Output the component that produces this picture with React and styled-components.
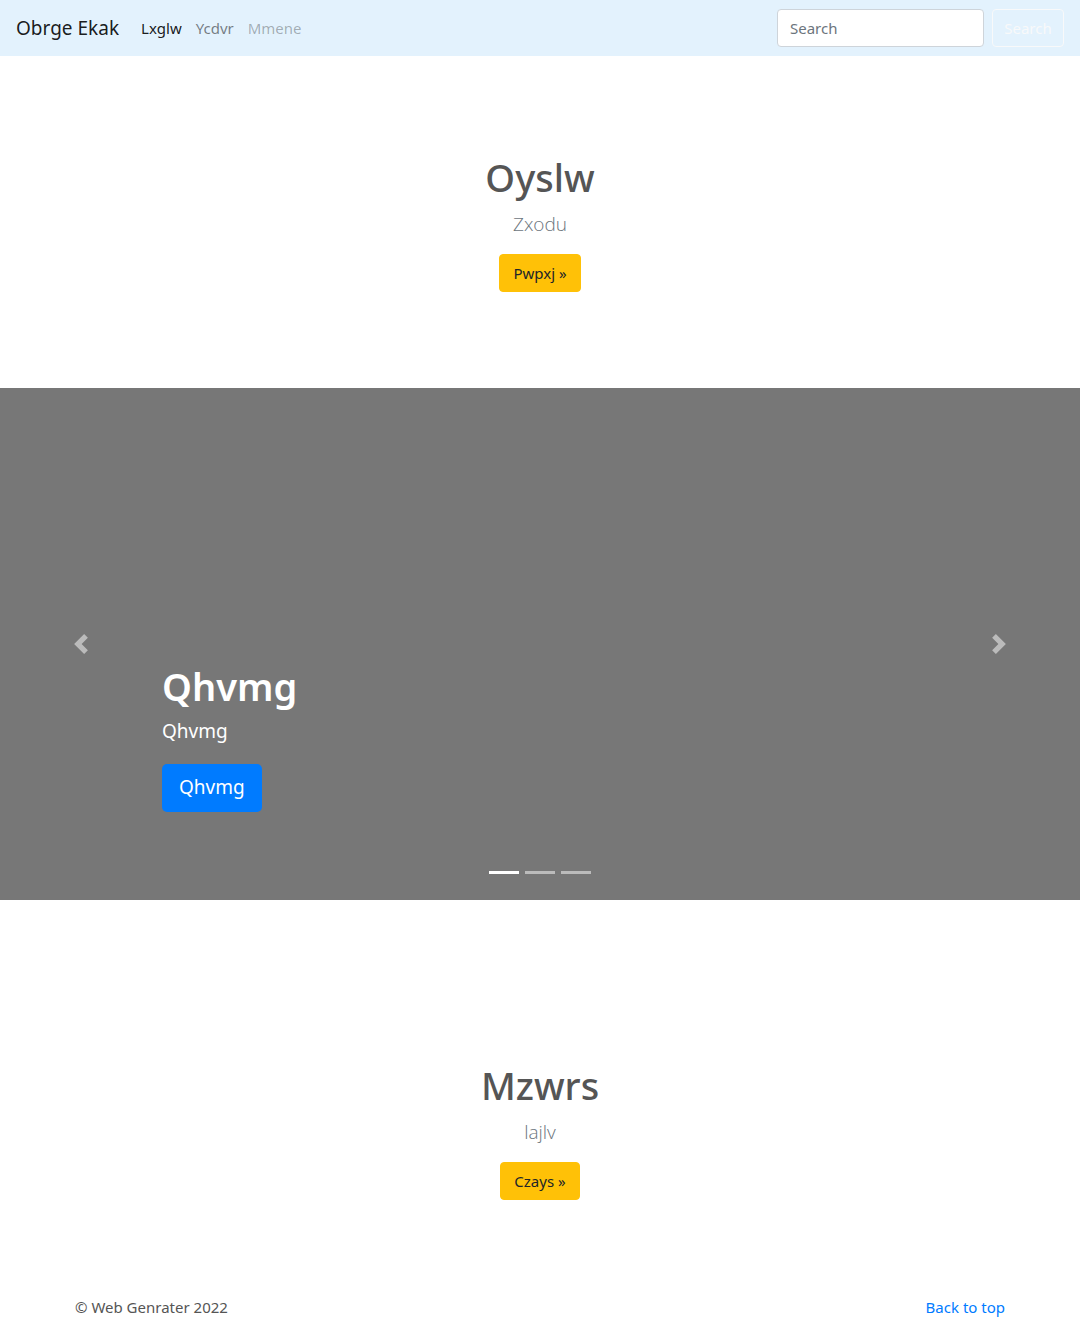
import React from "react";
import styled, { createGlobalStyle } from "styled-components";

const GlobalStyle = createGlobalStyle`
  body {
    margin: 0;
    font-family: "Noto Sans", "Open Sans", Arial, sans-serif;
    font-size: 15px;
    line-height: 1.5;
    color: #212529;
    background: #fff;
  }
  * { box-sizing: border-box; }
`;

const Navbar = styled.nav`
  height: 56px;
  background: #e3f2fd;
  display: flex;
  align-items: center;
  padding: 0 16px;
`;

const Brand = styled.a`
  font-size: 19px;
  color: rgba(0, 0, 0, 0.9);
  margin-right: 15px;
  text-decoration: none;
`;

const NavList = styled.div`
  display: flex;
  flex: 1;
`;

const NavLink = styled.a`
  padding: 8px 7px;
  font-size: 15px;
  text-decoration: none;
  color: ${(p) =>
    p.$state === "active" ? "rgba(0,0,0,0.9)" : p.$state === "disabled" ? "rgba(0,0,0,0.3)" : "rgba(0,0,0,0.5)"};
`;

const SearchForm = styled.form`
  display: flex;
  align-items: center;
  gap: 8px;
`;

const SearchInput = styled.input`
  width: 207px;
  height: 38px;
  padding: 6px 12px;
  font: inherit;
  font-size: 15px;
  border: 1px solid #ced4da;
  border-radius: 4px;
  background: #fff;
  color: #495057;
  &::placeholder { color: #6c757d; }
`;

const OutlineButton = styled.button`
  width: 72px;
  height: 38px;
  padding: 6px 0;
  font: inherit;
  font-size: 15px;
  color: #f8f9fa;
  background: transparent;
  border: 1px solid #f8f9fa;
  border-radius: 4px;
`;

const Hero = styled.section`
  text-align: center;
  padding: ${(p) => p.$pad};
`;

const HeroTitle = styled.h1`
  margin: 0 0 8px;
  font-size: 38px;
  font-weight: 500;
  line-height: 48px;
  color: #555;
`;

const Lead = styled.p`
  margin: 0 0 15px;
  font-family: "Open Sans", "Noto Sans", sans-serif;
  font-size: 19px;
  font-weight: 300;
  line-height: 30px;
  color: #6c757d;
`;

const WarnButton = styled.a`
  display: inline-block;
  height: 38px;
  padding: 6px 13px;
  font-size: 15px;
  line-height: 24px;
  color: #212529;
  background: #ffc107;
  border: 1px solid #ffc107;
  border-radius: 4px;
  text-decoration: none;
`;

const Carousel = styled.div`
  position: relative;
  height: 512px;
  background: #777;
  display: flex;
  align-items: flex-end;
`;

const Caption = styled.div`
  padding: 0 0 88px 162px;
  color: #fff;
`;

const CaptionTitle = styled.h1`
  margin: 0 0 6px;
  font-size: 38px;
  font-weight: 600;
  line-height: 48px;
`;

const CaptionText = styled.p`
  margin: 0 0 18px;
  font-size: 19px;
  line-height: 30px;
`;

const PrimaryLg = styled.a`
  display: inline-block;
  height: 48px;
  padding: 8px 17px;
  font-size: 19px;
  line-height: 31px;
  color: #fff;
  background: #007bff;
  border-radius: 5px;
  text-decoration: none;
`;

const Control = styled.a`
  position: absolute;
  top: 0;
  bottom: 0;
  width: 15%;
  display: flex;
  align-items: center;
  justify-content: center;
  ${(p) => (p.$side === "left" ? "left: 0;" : "right: 0;")}
  opacity: 0.5;
`;

const Indicators = styled.ol`
  position: absolute;
  left: 0;
  right: 0;
  bottom: 26px;
  margin: 0;
  padding: 0;
  list-style: none;
  display: flex;
  justify-content: center;
  gap: 6px;
`;

const Indicator = styled.li`
  width: 30px;
  height: 3px;
  background: #fff;
  opacity: ${(p) => (p.$active ? 1 : 0.5)};
`;

const Footer = styled.footer`
  width: 960px;
  margin: 0 auto;
  padding: 0 15px;
  display: flex;
  justify-content: space-between;
  font-size: 15px;
  line-height: 24px;
  color: #555;
`;

const TopLink = styled.a`
  color: #007bff;
  text-decoration: none;
`;

const Chevron = ({ dir }) => (
  <svg width="20" height="20" viewBox="0 0 8 8">
    {dir === "left" ? (
      <path fill="#fff" d="M5.25 0l-4 4 4 4 1.5-1.5L4.25 4l2.5-2.5L5.25 0z" />
    ) : (
      <path fill="#fff" d="M2.75 0l-1.5 1.5L3.75 4l-2.5 2.5L2.75 8l4-4-4-4z" />
    )}
  </svg>
);

export default function App() {
  return (
    <>
      <GlobalStyle />
      <Navbar>
        <Brand href="#">Obrge Ekak</Brand>
        <NavList>
          <NavLink $state="active" href="#">Lxglw</NavLink>
          <NavLink href="#">Ycdvr</NavLink>
          <NavLink $state="disabled" href="#">Mmene</NavLink>
        </NavList>
        <SearchForm onSubmit={(e) => e.preventDefault()}>
          <SearchInput placeholder="Search" />
          <OutlineButton type="submit">Search</OutlineButton>
        </SearchForm>
      </Navbar>

      <Hero $pad="97px 0 96px">
        <HeroTitle>Oyslw</HeroTitle>
        <Lead>Zxodu</Lead>
        <WarnButton href="#">Pwpxj &raquo;</WarnButton>
      </Hero>

      <Carousel>
        <Control $side="left" href="#"><Chevron dir="left" /></Control>
        <Caption>
          <CaptionTitle>Qhvmg</CaptionTitle>
          <CaptionText>Qhvmg</CaptionText>
          <PrimaryLg href="#">Qhvmg</PrimaryLg>
        </Caption>
        <Control $side="right" href="#"><Chevron dir="right" /></Control>
        <Indicators>
          <Indicator $active />
          <Indicator />
          <Indicator />
        </Indicators>
      </Carousel>

      <Hero $pad="161px 0 95px">
        <HeroTitle>Mzwrs</HeroTitle>
        <Lead>lajlv</Lead>
        <WarnButton href="#">Czays &raquo;</WarnButton>
      </Hero>

      <Footer>
        <span>© Web Genrater 2022</span>
        <TopLink href="#">Back to top</TopLink>
      </Footer>
    </>
  );
}
